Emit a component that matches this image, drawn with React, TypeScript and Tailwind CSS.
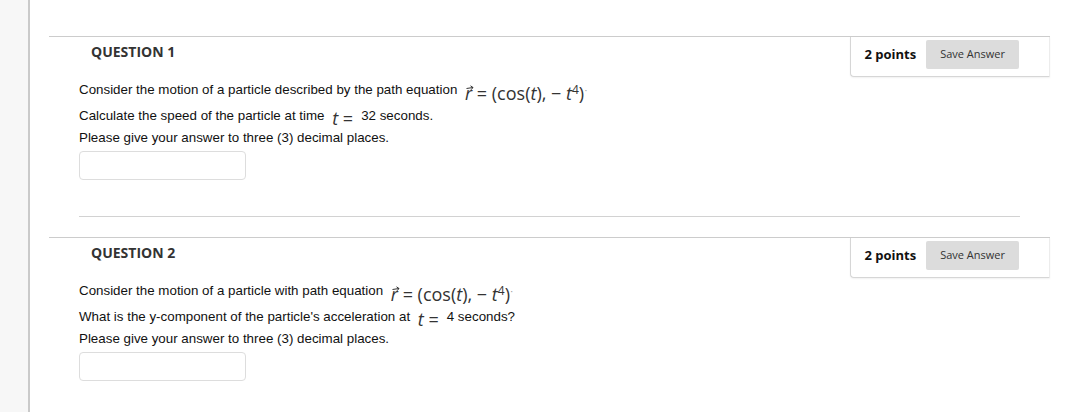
import type { ReactNode } from 'react';

function Vec() {
    return (
        <span className="relative inline-block italic">
            r
            <svg
                className="absolute left-[1px] top-[1px]"
                width="8"
                height="6"
                viewBox="0 0 8 6"
                fill="none"
                stroke="#333"
                strokeWidth="1"
            >
                <path d="M0.5 3.5 L7 2.5 M4.5 0.8 L7 2.5 L5 4.8" />
            </svg>
        </span>
    );
}

function PathEq() {
    return (
        <>
            <span className="ml-[4px] inline-block font-['Open_Sans',sans-serif] text-[18px] text-[#333] leading-none align-[-6px]">
                <Vec /> = (cos(<span className="italic">t</span>), − <span className="italic">t</span>
                <sup className="text-[12px]">4</sup>)
            </span>
            <span className="text-[#999] text-[10px]">·</span>
        </>
    );
}

function TEq() {
    return (
        <span className="ml-[4px] mr-[8px] inline-block font-['Open_Sans',sans-serif] text-[18px] text-[#333] leading-none align-[-5px]">
            <span className="italic">t</span> =
        </span>
    );
}

interface QuestionProps {
    number: number;
    line1: ReactNode;
    line2: ReactNode;
}

function Question({ number, line1, line2 }: QuestionProps) {
    return (
        <div className="border-t border-[#cccccc]">
            {/* header */}
            <div className="flex h-[40px]">
                <h2 className="pl-[42px] pt-[5px] text-[14px] leading-[19px] font-bold text-[#333] font-['Open_Sans',sans-serif]">
                    QUESTION {number}
                </h2>
                <div className="ml-auto flex items-start h-[40px] pl-[13px] pr-[30px] pt-[3px] bg-white border border-t-0 border-[#d6d6d6] border-r-[#ececec] rounded-bl-[4px] shadow-[0_1px_2px_rgba(0,0,0,0.06)]">
                    <div className="flex items-center gap-[10px] h-[29px]">
                        <span className="text-[13px] font-bold text-[#111] font-['Open_Sans',sans-serif]">2 points</span>
                        <button className="h-[29px] px-[14px] bg-[#dcdcdc] text-[11px] text-[#333] font-['Open_Sans',sans-serif] rounded-[2px]">
                            Save Answer
                        </button>
                    </div>
                </div>
            </div>

            {/* body */}
            <div className="pl-[30px] pr-[30px] pt-[2px] text-[13.35px] text-[#111] font-['Liberation_Sans',Arial,sans-serif]">
                <div className="h-[22px] leading-[22px] whitespace-nowrap">{line1}</div>
                <div className="mt-[4px] h-[22px] leading-[22px] whitespace-nowrap">{line2}</div>
                <div className="h-[22px] leading-[22px]">Please give your answer to three (3) decimal places.</div>
                <input
                    type="text"
                    className="mt-[2px] block w-[167px] h-[29px] bg-white border border-[#dddddd] rounded-[4px] outline-none"
                />
                <div className="mt-[36px] border-t border-[#d2d2d2]" />
            </div>
        </div>
    );
}

export default function App() {
    return (
        <div className="flex min-h-[412px] bg-white">
            <div className="w-[30px] shrink-0 bg-[#f7f7f7] border-r-2 border-[#cacaca]" />
            <div className="flex-1 pl-[19px] pr-[20px] pt-[36px]">
                <Question
                    number={1}
                    line1={<>Consider the motion of a particle described by the path equation <PathEq /></>}
                    line2={<>Calculate the speed of the particle at time <TEq />32 seconds.</>}
                />
                <div className="mt-[20px]">
                    <Question
                        number={2}
                        line1={<>Consider the motion of a particle with path equation <PathEq /></>}
                        line2={<>What is the y-component of the particle's acceleration at <TEq />4 seconds?</>}
                    />
                </div>
            </div>
        </div>
    );
}
